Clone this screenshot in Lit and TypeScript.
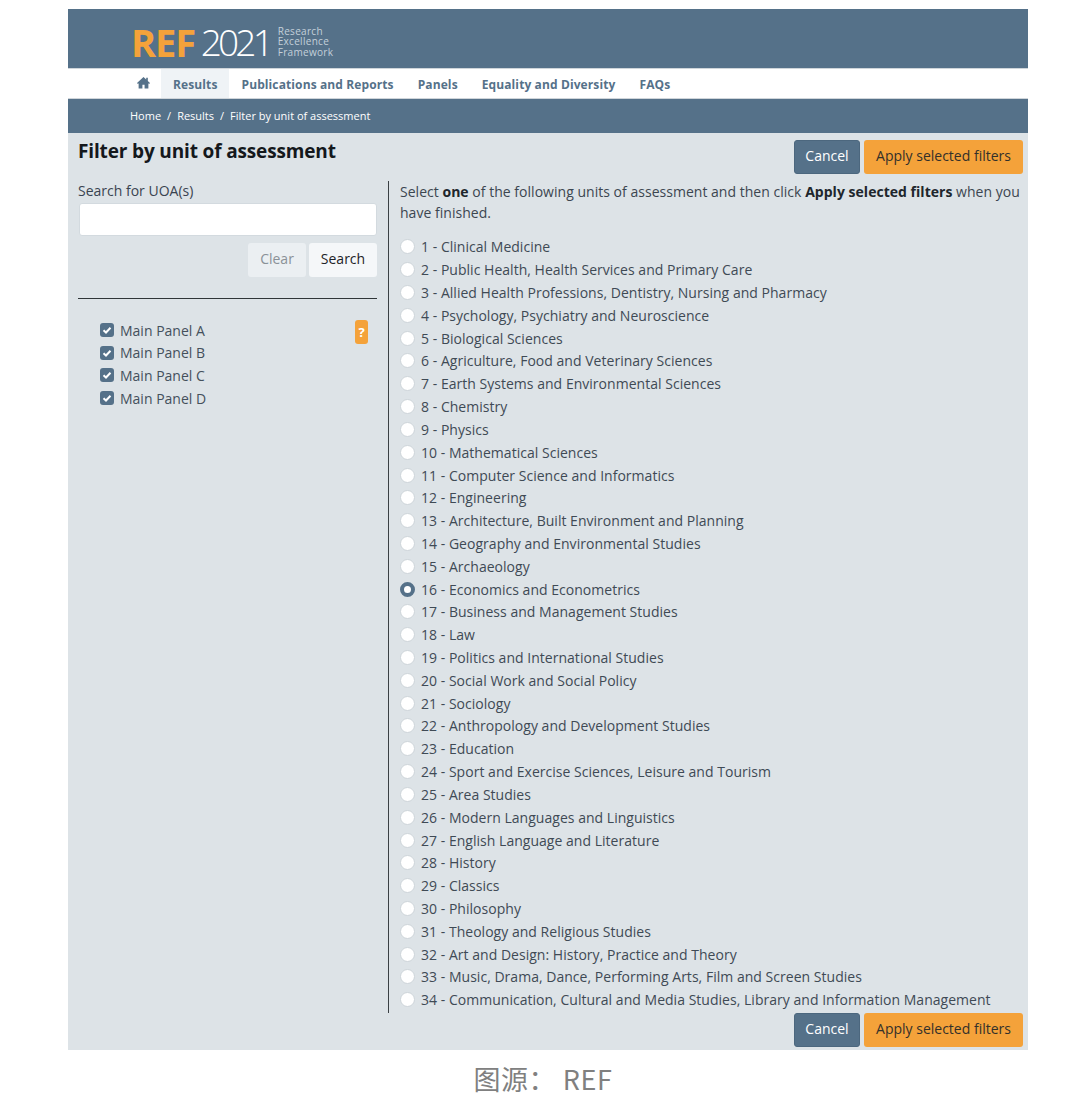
import { LitElement, html, css } from "lit";
import { customElement } from "lit/decorators.js";

const UOAS = [
  "1 - Clinical Medicine",
  "2 - Public Health, Health Services and Primary Care",
  "3 - Allied Health Professions, Dentistry, Nursing and Pharmacy",
  "4 - Psychology, Psychiatry and Neuroscience",
  "5 - Biological Sciences",
  "6 - Agriculture, Food and Veterinary Sciences",
  "7 - Earth Systems and Environmental Sciences",
  "8 - Chemistry",
  "9 - Physics",
  "10 - Mathematical Sciences",
  "11 - Computer Science and Informatics",
  "12 - Engineering",
  "13 - Architecture, Built Environment and Planning",
  "14 - Geography and Environmental Studies",
  "15 - Archaeology",
  "16 - Economics and Econometrics",
  "17 - Business and Management Studies",
  "18 - Law",
  "19 - Politics and International Studies",
  "20 - Social Work and Social Policy",
  "21 - Sociology",
  "22 - Anthropology and Development Studies",
  "23 - Education",
  "24 - Sport and Exercise Sciences, Leisure and Tourism",
  "25 - Area Studies",
  "26 - Modern Languages and Linguistics",
  "27 - English Language and Literature",
  "28 - History",
  "29 - Classics",
  "30 - Philosophy",
  "31 - Theology and Religious Studies",
  "32 - Art and Design: History, Practice and Theory",
  "33 - Music, Drama, Dance, Performing Arts, Film and Screen Studies",
  "34 - Communication, Cultural and Media Studies, Library and Information Management",
];

@customElement("app-root")
export class AppRoot extends LitElement {
  static styles = css`
    :host {
      display: block;
      background: #fff;
      font-family: "Open Sans", "Noto Sans", sans-serif;
      color: #3a4450;
      padding-top: 9px;
      height: 1107px;
      overflow: hidden;
    }
    .page { width: 960px; margin-left: 68px; }
    .masthead {
      height: 59px;
      background: #557189;
      display: flex;
      align-items: center;
      padding: 6px 0 0 63px;
      box-sizing: border-box;
    }
    .ref { font: 700 38px/1 "Open Sans", sans-serif; color: #f4a23a; letter-spacing: -1px; }
    .year { font: 300 37px/1 "Open Sans", sans-serif; color: #fff; letter-spacing: -3.8px; margin-left: 5.5px; }
    .tag { font: 400 10px/10.5px "Open Sans", sans-serif; letter-spacing: 0.3px; color: #c4d0da; margin-left: 7.7px; }
    nav {
      height: 31px;
      box-sizing: border-box;
      background: #fff;
      border-top: 1px solid #cfd5da;
      border-bottom: 1px solid #cfd5da;
      display: flex;
      align-items: stretch;
      padding-left: 64px;
      font-size: 12px;
      letter-spacing: 0.11px;
      font-weight: 700;
      color: #557189;
    }
    nav a { display: flex; align-items: center; padding: 2px 12px 0; white-space: nowrap; }
    nav a.home { padding: 0 11px 0 5px; }
    nav a.active { background: #eff3f6; }
    nav svg { width: 13px; height: 13px; fill: #557189; margin-bottom: 3px; }
    .crumbs {
      height: 34px;
      background: #557189;
      color: #fff;
      display: flex;
      align-items: center;
      gap: 6px;
      padding: 0 0 1px 62px;
      box-sizing: border-box;
      font-size: 11px;
    }
    .body {
      background: #dde3e7;
      height: 917px;
      box-sizing: border-box;
      padding: 7px 5px 0 10px;
      position: relative;
    }
    .top { display: flex; justify-content: space-between; align-items: flex-start; height: 41px; }
    h1 { margin: 0; font-size: 19px; line-height: 22px; font-weight: 700; color: #14181c; letter-spacing: -0.15px; }
    .actions { display: flex; gap: 4px; justify-content: flex-end; }
    .btn {
      height: 34px;
      box-sizing: border-box;
      border-radius: 3px;
      display: flex;
      align-items: center;
      justify-content: center;
      font-size: 14px;
      padding-bottom: 4px;
      white-space: nowrap;
    }
    .cancel { width: 66px; background: #557189; color: #fff; border: 1px solid #4c677e; }
    .apply { width: 159px; background: #f4a23a; color: #33302a; }
    .cols { display: flex; height: 832px; }
    .left { width: 300px; flex: none; }
    .label { font-size: 14px; line-height: 20px; margin-top: 0; }
    .input {
      margin: 2px 0 0 1px;
      height: 33px;
      width: 298px;
      box-sizing: border-box;
      background: #fff;
      border: 1px solid #d3dadf;
      border-radius: 3px;
    }
    .search-row { display: flex; justify-content: flex-end; gap: 3px; margin: 7px 1px 0 0; }
    .plain { height: 34px; box-sizing: border-box; padding-bottom: 4px; font-size: 14px; background: #f5f7f9; color: #1e2328; border-radius: 3px; display: flex; align-items: center; justify-content: center; }
    .plain.clear { width: 58px; background: #ebeff2; color: #8a9197; }
    .plain.search { width: 68px; }
    hr { border: 0; border-top: 1px solid #2f3538; margin: 21px 1px 0 0; }
    .panels { margin: 20px 0 0 22px; position: relative; width: 268px; }
    .panel { display: flex; align-items: center; gap: 6px; height: 22.6px; font-size: 14px; color: #44505c; }
    .check {
      width: 14px; height: 14px; border-radius: 3px; background: #557189;
      display: flex; align-items: center; justify-content: center; flex: none;
    }
    .check svg { width: 10px; height: 10px; fill: none; stroke: #fff; stroke-width: 2; }
    .help {
      position: absolute; right: 0; top: 1px; width: 13px; height: 24px;
      background: #f4a23a; border-radius: 3px; color: #fff; font-size: 13px; font-weight: 700;
      display: flex; align-items: center; justify-content: center;
    }
    .right {
      margin-left: 10px;
      border-left: 1px solid #3a4044;
      padding-left: 11px;
      flex: 1;
      min-width: 0;
      letter-spacing: 0.025px;
    }
    .intro { font-size: 14px; line-height: 21px; margin: 0; color: #3c4650; white-space: nowrap; }
    .intro b { color: #20262c; font-weight: 700; }
    .list { margin-top: 12.5px; }
    .row { display: flex; align-items: center; height: 22.82px; gap: 6px; font-size: 14px; white-space: nowrap; color: #3f4a55; }
    .radio { width: 13px; height: 13px; border-radius: 50%; background: #fff; border: 1px solid #cdd4d9; flex: none; }
    .radio.on { border: 4px solid #557189; width: 7px; height: 7px; }
    .bottom { position: absolute; right: 5px; bottom: 3px; }
    .caption {
      height: 57px;
      display: flex;
      align-items: center;
      justify-content: center;
      color: #808080;
      font-family: "Noto Sans CJK SC", "Noto Sans", sans-serif;
      font-size: 27px;
      letter-spacing: 0.6px;
      box-sizing: border-box;
      width: 1086px;
      margin-left: -68px;
    }
  `;

  private actions() {
    return html`<div class="actions">
      <div class="btn cancel">Cancel</div>
      <div class="btn apply">Apply selected filters</div>
    </div>`;
  }

  render() {
    return html`
      <div class="page">
        <div class="masthead">
          <span class="ref">REF</span><span class="year">2021</span>
          <div class="tag">Research<br />Excellence<br />Framework</div>
        </div>
        <nav>
          <a class="home"><svg viewBox="0 0 24 24"><path d="M12 2 0 13l1.6 1.8L3 13.6V23h7v-7h4v7h7v-9.4l1.4 1.2L24 13l-4-3.7V3h-3v3.5z" /></svg></a>
          <a class="active">Results</a>
          <a>Publications and Reports</a>
          <a>Panels</a>
          <a>Equality and Diversity</a>
          <a>FAQs</a>
        </nav>
        <div class="crumbs">
          <span>Home</span><span>/</span><span>Results</span><span>/</span><span>Filter by unit of assessment</span>
        </div>
        <div class="body">
          <div class="top">
            <h1>Filter by unit of assessment</h1>
            ${this.actions()}
          </div>
          <div class="cols">
            <div class="left">
              <div class="label">Search for UOA(s)</div>
              <div class="input"></div>
              <div class="search-row">
                <div class="plain clear">Clear</div>
                <div class="plain search">Search</div>
              </div>
              <hr />
              <div class="panels">
                ${["A", "B", "C", "D"].map(
                  (p) => html`<div class="panel">
                    <span class="check"><svg viewBox="0 0 10 10"><path d="M1.5 5.2 4 7.5 8.5 2.8" /></svg></span>
                    Main Panel ${p}
                  </div>`
                )}
                <div class="help">?</div>
              </div>
            </div>
            <div class="right">
              <p class="intro">Select <b>one</b> of the following units of assessment and then click <b>Apply selected filters</b> when you<br />have finished.</p>
              <div class="list">
                ${UOAS.map(
                  (u) => html`<div class="row">
                    <span class="radio ${u.startsWith("16 ") ? "on" : ""}"></span>${u}
                  </div>`
                )}
              </div>
            </div>
          </div>
          <div class="bottom">${this.actions()}</div>
        </div>
        <div class="caption">图源： REF</div>
      </div>
    `;
  }
}
